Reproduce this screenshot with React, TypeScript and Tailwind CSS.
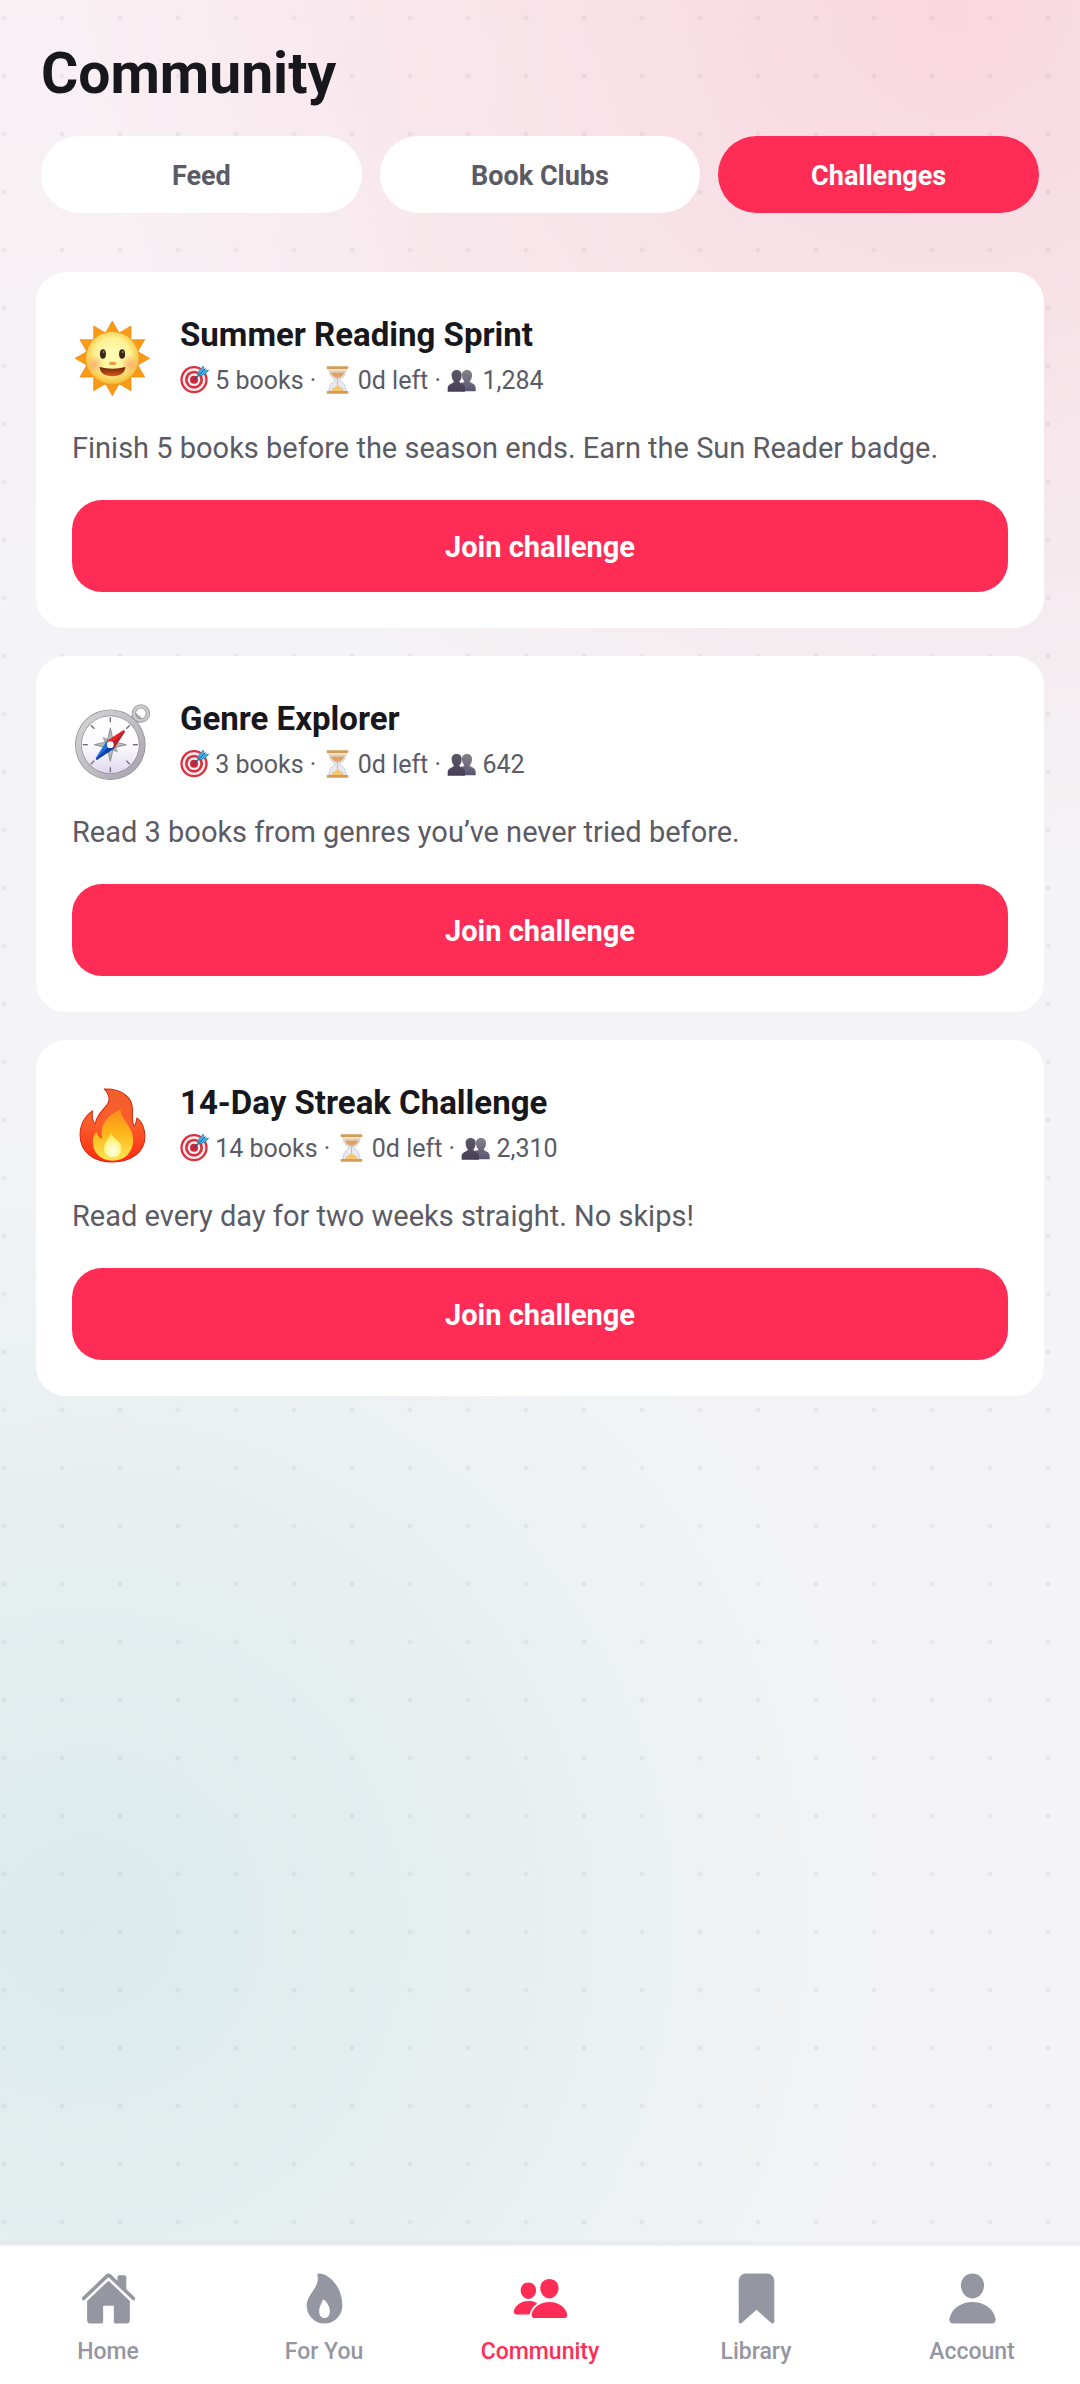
import { useState } from 'react'
import { IoBookmark, IoFlame, IoHome, IoPeople, IoPerson } from 'react-icons/io5'

const tabs = ['Feed', 'Book Clubs', 'Challenges']

const navItems = [
  { label: 'Home', Icon: IoHome },
  { label: 'For You', Icon: IoFlame },
  { label: 'Community', Icon: IoPeople },
  { label: 'Library', Icon: IoBookmark },
  { label: 'Account', Icon: IoPerson },
]

// Gradients shared by all the emoji drawings
const Gradients = () => (
  <svg className="absolute" width="0" height="0" aria-hidden="true">
    <defs>
      <radialGradient id="sunFace" cx="0.5" cy="0.45" r="0.56">
        <stop offset="0" stopColor="#fffdb8" />
        <stop offset="0.6" stopColor="#fdf192" />
        <stop offset="0.88" stopColor="#f8c645" />
        <stop offset="1" stopColor="#ec9a1e" />
      </radialGradient>
      <radialGradient id="sunCheek">
        <stop offset="0" stopColor="#fba46c" stopOpacity="0.8" />
        <stop offset="1" stopColor="#fba46c" stopOpacity="0" />
      </radialGradient>
      <linearGradient id="mouth" x1="0" y1="0" x2="0" y2="1">
        <stop offset="0" stopColor="#6f2306" />
        <stop offset="1" stopColor="#d8571f" />
      </linearGradient>
      <linearGradient id="rim" x1="0" y1="0" x2="1" y2="1">
        <stop offset="0" stopColor="#d6d6d8" />
        <stop offset="0.5" stopColor="#c0c0c4" />
        <stop offset="1" stopColor="#a49eae" />
      </linearGradient>
      <linearGradient id="dial" x1="0" y1="0" x2="0" y2="1">
        <stop offset="0" stopColor="#ffffff" />
        <stop offset="0.5" stopColor="#fcfbff" />
        <stop offset="1" stopColor="#e0d8ee" />
      </linearGradient>
      <linearGradient id="fireOuter" x1="0" y1="0" x2="0" y2="1">
        <stop offset="0" stopColor="#f0602e" />
        <stop offset="0.5" stopColor="#fc5c2a" />
        <stop offset="1" stopColor="#fd2a12" />
      </linearGradient>
      <linearGradient id="fireMid" x1="0" y1="0" x2="0" y2="1">
        <stop offset="0" stopColor="#fb8a1c" />
        <stop offset="0.45" stopColor="#fdb41a" />
        <stop offset="1" stopColor="#ffe650" />
      </linearGradient>
      <radialGradient id="fireCore" cx="0.5" cy="0.75" r="0.6">
        <stop offset="0" stopColor="#fffff0" />
        <stop offset="0.6" stopColor="#fff79c" />
        <stop offset="1" stopColor="#ffe860" />
      </radialGradient>
      <linearGradient id="sandTop" x1="0" y1="0" x2="0" y2="1">
        <stop offset="0" stopColor="#f7e9dd" />
        <stop offset="0.5" stopColor="#d79a66" />
        <stop offset="1" stopColor="#e8b98c" />
      </linearGradient>
      <linearGradient id="person" x1="0" y1="0" x2="0" y2="1">
        <stop offset="0" stopColor="#5c5965" />
        <stop offset="1" stopColor="#453f57" />
      </linearGradient>
      <linearGradient id="personBack" x1="0" y1="0" x2="0" y2="1">
        <stop offset="0" stopColor="#85828c" />
        <stop offset="1" stopColor="#5a5470" />
      </linearGradient>
    </defs>
  </svg>
)

const rays = [0, 30, 60, 90, 120, 150, 180, 210, 240, 270, 300, 330]

const Sun = () => (
  <svg className="w-20 shrink-0" viewBox="37 50 238 238" aria-hidden="true">
    {rays.map((deg) => (
      <path
        key={deg}
        d="M157 62 L182 106 L132 106 Z"
        fill="#fc9a14"
        stroke="#ef8512"
        strokeWidth="2"
        strokeLinejoin="round"
        transform={`rotate(${deg} 157 173)`}
      />
    ))}
    <circle cx="157" cy="173" r="80" fill="url(#sunFace)" stroke="#e58c1a" strokeWidth="2" />
    <circle cx="104" cy="190" r="27" fill="url(#sunCheek)" />
    <circle cx="210" cy="190" r="27" fill="url(#sunCheek)" />
    <ellipse cx="129" cy="160" rx="9" ry="14" fill="#3b2413" />
    <ellipse cx="186" cy="160" rx="9" ry="14" fill="#3b2413" />
    <circle cx="131" cy="154" r="3" fill="#9a8468" />
    <circle cx="188" cy="154" r="3" fill="#9a8468" />
    <ellipse cx="158" cy="188" rx="11" ry="5" fill="#f09a3e" />
    <path d="M119 199 Q157 209 196 199 Q194 226 157 226 Q121 226 119 199 Z" fill="url(#mouth)" />
  </svg>
)

const ticks = [0, 45, 90, 135, 180, 225, 270, 315]

const Compass = () => (
  <svg className="w-20 shrink-0" viewBox="37 32 238 238" aria-hidden="true">
    <path d="M212 78 L224 64 L246 84 L236 98 Z" fill="#a7a7ab" />
    <circle cx="242" cy="69" r="21" fill="none" stroke="#98989c" strokeWidth="13" />
    <circle cx="242" cy="69" r="21" fill="none" stroke="#cbcbce" strokeWidth="8" />
    <circle cx="151" cy="162" r="105" fill="#88888d" />
    <circle cx="151" cy="162" r="103" fill="url(#rim)" />
    <circle cx="151" cy="162" r="87" fill="#8b8892" />
    <circle cx="151" cy="162" r="85" fill="url(#dial)" />
    {ticks.map((deg) => (
      <path
        key={deg}
        d="M151 80 V95"
        stroke="#6d6d72"
        strokeWidth="4"
        transform={`rotate(${deg} 151 162)`}
      />
    ))}
    <path
      d="M151 146 L174 139 L167 162 L174 185 L151 178 L128 185 L135 162 L128 139 Z"
      fill="#a9b0b2"
    />
    <path
      d="M151 112 L160 153 L199 162 L160 171 L151 212 L142 171 L103 162 L142 153 Z"
      fill="#b6bcbe"
      stroke="#8d9496"
      strokeWidth="3"
    />
    <path d="M140 151 L188 120 Q195 117 193 125 L162 173 Z" fill="#e8232b" />
    <path d="M151 162 L193 120 Q195 120 193 126 L162 173 Z" fill="#b5202c" />
    <path d="M140 151 L108 201 Q106 207 113 205 L162 173 Z" fill="#1f6fe0" />
    <path d="M151 162 L108 205 Q110 208 114 205 L162 173 Z" fill="#0d3f9e" />
    <circle cx="151" cy="162" r="10" fill="#ffffff" />
  </svg>
)

const Fire = () => (
  <svg className="w-20 shrink-0" viewBox="37 44 238 238" aria-hidden="true">
    <path
      d="M133 56 C185 54 219 80 217 122 C216 140 215 154 221 166 C228 162 228 150 230 142 C246 152 254 176 254 198 C254 244 212 273 158 273 C102 273 62 244 61 194 C61 160 76 136 98 121 C96 138 98 152 106 160 C112 120 152 108 147 82 C145 70 140 62 133 56 Z"
      fill="url(#fireOuter)"
      stroke="#d32a10"
      strokeWidth="3"
      strokeLinejoin="round"
    />
    <path
      d="M182 116 C178 142 219 168 219 206 C219 246 192 269 158 269 C122 269 99 244 99 214 C99 198 104 188 112 184 C112 194 118 202 127 203 C118 160 146 132 182 116 Z"
      fill="url(#fireMid)"
    />
    <path
      d="M153 186 C156 206 184 206 184 232 C184 250 174 259 159 259 C143 259 132 248 132 232 C132 214 148 204 153 186 Z"
      fill="url(#fireCore)"
    />
  </svg>
)

const Target = () => (
  <svg className="inline-block w-[29px] align-[-5px]" viewBox="14 14 87 87" aria-hidden="true">
    <circle cx="56" cy="58" r="41" fill="#dc2f3c" />
    <circle cx="56" cy="58" r="34" fill="#f7eef0" />
    <circle cx="56" cy="58" r="27" fill="#dc2f3c" />
    <circle cx="56" cy="58" r="19" fill="#f7eef0" />
    <circle cx="56" cy="58" r="12" fill="#d02436" />
    <path d="M56 58 L80 35" stroke="#23567c" strokeWidth="4" />
    <path
      d="M69 46 L71 31 L84 17 L86 28 L100 30 L87 43 Z"
      fill="#45aee0"
      stroke="#2481b4"
      strokeWidth="2"
      strokeLinejoin="round"
    />
    <path d="M70 45 L91 24" stroke="#1d6c9c" strokeWidth="3" />
  </svg>
)

const Hourglass = () => (
  <svg className="inline-block w-[29px] align-[-5px]" viewBox="438 14 87 87" aria-hidden="true">
    <path
      d="M456 24 H507 C507 44 500 50 487 58 C500 66 507 76 507 94 H456 C456 76 463 66 476 58 C463 50 456 44 456 24 Z"
      fill="#e7e9f0"
      stroke="#b8bac6"
      strokeWidth="2"
    />
    <path d="M459 28 H504 C503 42 496 48 482 56 C468 48 460 42 459 28 Z" fill="url(#sandTop)" />
    <path d="M480 56 H483 V80 H480 Z" fill="#e8b878" />
    <path d="M461 93 C464 84 474 80 482 74 C490 80 499 84 502 93 Z" fill="#f5c66c" />
    <rect x="449" y="18" width="65" height="8" rx="2" fill="#d29d58" />
    <rect x="449" y="92" width="65" height="8" rx="2" fill="#d29d58" />
  </svg>
)

const People = () => (
  <svg className="inline-block w-[29px] align-[-5px]" viewBox="831 35 87 87" aria-hidden="true">
    <path
      d="M891 50 C901 50 907 57 906 67 C905 76 903 80 899 83 C899 90 917 90 917 104 V114 H872 V88 C880 87 883 87 883 83 C879 80 877 76 876 67 C875 57 881 50 891 50 Z"
      fill="url(#personBack)"
    />
    <path
      d="M860 50 C870 50 876 57 875 67 C874 76 872 81 868 84 C868 92 885 90 885 105 V115 H833 V105 C833 90 852 92 852 84 C848 81 846 76 845 67 C844 57 850 50 860 50 Z"
      fill="url(#person)"
    />
  </svg>
)

const challenges = [
  {
    title: 'Summer Reading Sprint',
    Emoji: Sun,
    books: 5,
    members: '1,284',
    description: 'Finish 5 books before the season ends. Earn the Sun Reader badge.',
  },
  {
    title: 'Genre Explorer',
    Emoji: Compass,
    books: 3,
    members: '642',
    description: 'Read 3 books from genres you’ve never tried before.',
  },
  {
    title: '14-Day Streak Challenge',
    Emoji: Fire,
    books: 14,
    members: '2,310',
    description: 'Read every day for two weeks straight. No skips!',
  },
]

const ChallengeCard = ({ title, Emoji, books, members, description }: any) => (
  <article className="p-9 bg-white rounded-[30px]">
    <div className="flex items-center gap-7 h-[98px]">
      <Emoji />
      <div>
        <h2 className="text-[33px] leading-9 font-bold text-[#17171c]">{title}</h2>
        <p className="mt-3 text-[25px] leading-8 text-[#5b5b66]">
          <Target /> {books} books · <Hourglass /> 0d left · <People /> {members}
        </p>
      </div>
    </div>
    <p className="mt-[22px] text-[29px] leading-10 text-[#5b5b66]">{description}</p>
    <button
      type="button"
      className="mt-8 pt-1 w-full h-[92px] rounded-[30px] bg-[#ff2d55] text-[29px] font-bold text-white"
    >
      Join challenge
    </button>
  </article>
)

const App = () => {
  const [tab, setTab] = useState('Challenges')
  return (
    <div className="flex flex-col min-h-screen font-[Roboto,sans-serif] bg-[radial-gradient(circle_at_4px_18px,rgba(90,90,110,0.08)_2px,transparent_3px),radial-gradient(circle_830px_at_8%_1926px,rgba(38,165,155,0.12),transparent),radial-gradient(circle_880px_at_88%_17px,rgba(255,45,85,0.13),transparent),linear-gradient(#f9f0f4,#f4f4f6_640px)] bg-[size:58px_58px,auto,auto,auto]">
      <Gradients />
      <main className="flex-1">
        <header className="px-[41px] pt-10">
          <h1 className="text-[57px] leading-[68px] font-bold text-[#17171c]">Community</h1>
          <div className="grid grid-cols-3 gap-[18px] mt-7">
            {tabs.map((name) => (
              <button
                key={name}
                type="button"
                onClick={() => setTab(name)}
                className={
                  name === tab
                    ? 'h-[77px] pt-1 rounded-full text-[27px] font-bold bg-[#ff2d55] text-white'
                    : 'h-[77px] pt-1 rounded-full text-[27px] font-bold bg-white text-[#5b5b66]'
                }
              >
                {name}
              </button>
            ))}
          </div>
        </header>
        <section className="flex flex-col gap-7 px-9 pt-[59px] pb-7">
          {challenges.map((challenge) => (
            <ChallengeCard key={challenge.title} {...challenge} />
          ))}
        </section>
      </main>
      <nav className="grid grid-cols-5 pt-6 pb-[18px] bg-white border-t-2 border-[#eff0f3] shadow-[0_-1px_4px_rgba(60,60,90,0.08)]">
        {navItems.map(({ label, Icon }) => (
          <a
            key={label}
            href="#"
            className={
              label === 'Community'
                ? 'flex flex-col items-center gap-[11px] text-[#ff2d55]'
                : 'flex flex-col items-center gap-[11px] text-[#9696a2]'
            }
          >
            <Icon size={57} />
            <span className="text-[23px] leading-7 font-medium">{label}</span>
          </a>
        ))}
      </nav>
    </div>
  )
}

export default App
